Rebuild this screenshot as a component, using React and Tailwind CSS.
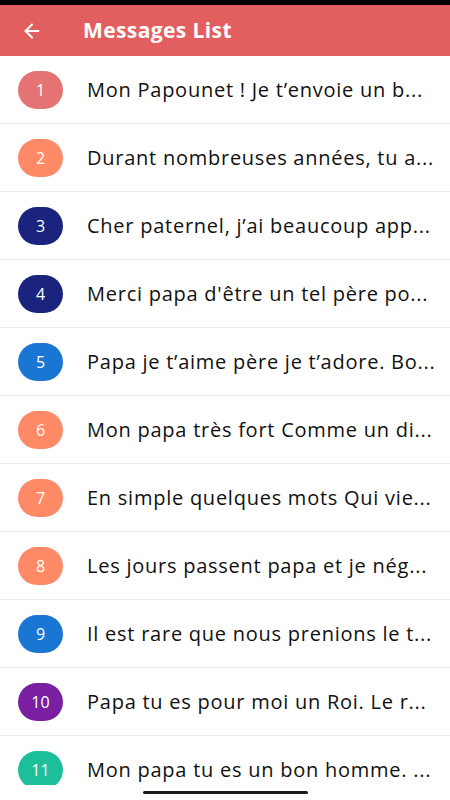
import { ArrowLeft } from "lucide-react";

const messages = [
  { n: 1, color: "bg-[#e57373]", text: "Mon Papounet ! Je t’envoie un b..." },
  { n: 2, color: "bg-[#ff8a65]", text: "Durant nombreuses années, tu a..." },
  { n: 3, color: "bg-[#1a237e]", text: "Cher paternel, j’ai beaucoup app..." },
  { n: 4, color: "bg-[#1a237e]", text: "Merci papa d'être un tel père po..." },
  { n: 5, color: "bg-[#1976d2]", text: "Papa je t’aime père je t’adore. Bo..." },
  { n: 6, color: "bg-[#ff8a65]", text: "Mon papa très fort Comme un di..." },
  { n: 7, color: "bg-[#ff8a65]", text: "En simple quelques mots Qui vie..." },
  { n: 8, color: "bg-[#ff8a65]", text: "Les jours passent papa et je nég..." },
  { n: 9, color: "bg-[#1976d2]", text: "Il est rare que nous prenions le t..." },
  { n: 10, color: "bg-[#7b1fa2]", text: "Papa tu es pour moi un Roi. Le r..." },
  { n: 11, color: "bg-[#1dbf9b]", text: "Mon papa tu es un bon homme. ..." },
];

export default function App() {
  return (
    <div
      className="w-[450px] h-[800px] bg-white flex flex-col overflow-hidden"
      style={{ fontFamily: "'Open Sans', Roboto, sans-serif" }}
    >
      <div className="h-[5px] bg-black shrink-0" />
      <div className="h-[51px] bg-[#e35e5e] flex items-center shrink-0">
        <ArrowLeft className="text-white ml-[21px]" size={22} strokeWidth={2.2} />
        <h1 className="ml-[40px] text-white text-[21px] font-bold tracking-[0.4px]">
          Messages List
        </h1>
      </div>

      <div className="h-[729px] overflow-hidden shrink-0">
        {messages.map((m) => (
          <div
            key={m.n}
            className="h-[68px] flex items-center border-b border-[#ececec]"
          >
            <div
              className={`${m.color} ml-[18px] w-[45px] h-[38px] rounded-full flex items-center justify-center text-white text-[16px] shrink-0`}
            >
              {m.n}
            </div>
            <p className="ml-[24px] text-[20px] text-[#111111] whitespace-nowrap tracking-[0.75px]">
              {m.text}
            </p>
          </div>
        ))}
      </div>

      <div className="flex-1 flex justify-center pt-[6px]">
        <div className="w-[165px] h-[3px] bg-[#1a1a1a] rounded-full" />
      </div>
    </div>
  );
}
